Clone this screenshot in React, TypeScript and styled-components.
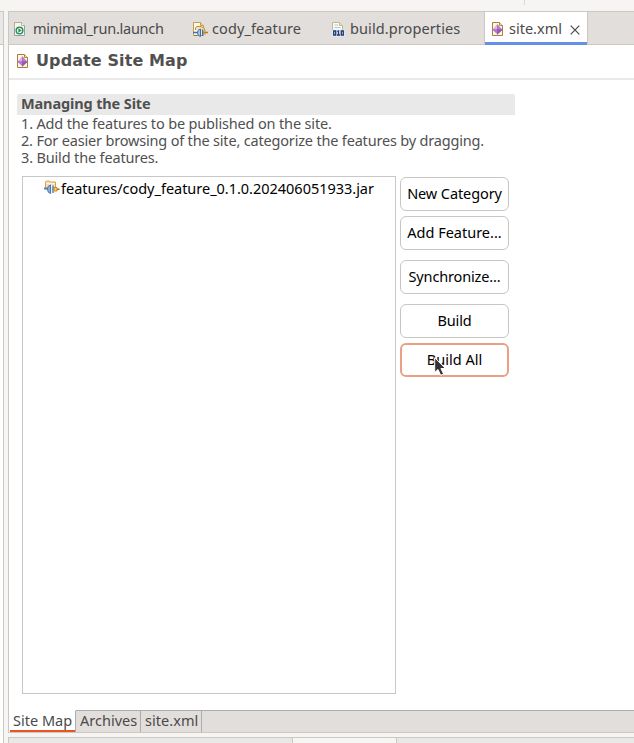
import React from "react";
import styled, { createGlobalStyle } from "styled-components";

const Global = createGlobalStyle`
  *, *::before, *::after { box-sizing: border-box; }
  body { margin: 0; background: #f6f5f4; overflow: hidden; }
`;

const Window = styled.div`
  width: 634px;
  height: 743px;
  display: flex;
  overflow: hidden;
  background: #f6f5f4;
  font: 14.5px/17px "Noto Sans", "Open Sans", sans-serif;
  color: #4a4a4a;
`;

const Text = styled.span<{ $track?: number }>`
  white-space: pre;
  letter-spacing: ${(p) => p.$track ?? 0}px;
`;

const TabText = styled(Text)`
  padding-bottom: 2px;
`;

const NeighbourPane = styled.div`
  width: 4px;
  flex: none;
  margin-top: 11px;
  background: #fff;
  border-top: 1px solid #cdc7c2;
  border-right: 1px solid #cdc7c2;
`;

const NeighbourTabs = styled.div`
  height: 33px;
  background: #e9e8e6;
  border-bottom: 1px solid #cdc7c2;
`;

const Column = styled.div`
  flex: 1;
  min-width: 0;
  margin-left: 4px;
  display: flex;
  flex-direction: column;
`;

const ToolStrip = styled.div`
  height: 11px;
  flex: none;
  display: flex;
  padding-left: 516px;
`;

const Separator = styled.div`
  width: 1px;
  height: 5px;
  background: #dcd8d5;
`;

const Editor = styled.div`
  height: 722px;
  flex: none;
  display: flex;
  flex-direction: column;
  background: #fff;
  border: solid #cdc7c2;
  border-width: 1px 0 1px 1px;
`;

const EditorTabs = styled.div`
  height: 33px;
  flex: none;
  display: flex;
  background: #e1dedb;
  box-shadow: inset 0 -1px #cdc7c2;
`;

const EditorTab = styled.div<{ $width: number; $pad: number; $gap: number; $active?: boolean }>`
  width: ${(p) => p.$width}px;
  height: 33px;
  flex: none;
  display: flex;
  align-items: center;
  gap: ${(p) => p.$gap}px;
  padding-left: ${(p) => p.$pad}px;
  padding-top: 1px;
  ${(p) =>
    p.$active &&
    `background: #fff;
     border: solid #cdc7c2;
     border-width: 0 1px;
     box-shadow: inset 0 -3px #6690e4;`}
`;

const Icon = styled.svg`
  display: block;
  flex: none;
`;

const CloseMark = styled(Icon)`
  margin: 1px 0 0 3px;
`;

const FormHeader = styled.div`
  height: 35px;
  flex: none;
  display: flex;
  gap: 7px;
  padding: 9px 0 0 8px;
  border-bottom: 2px solid #e9e9e9;
`;

const FormTitle = styled.h1`
  margin: -3px 0 0;
  font: bold 16px/19px "DejaVu Sans", sans-serif;
  letter-spacing: 0.1px;
  color: #505050;
  white-space: nowrap;
`;

const Section = styled.section`
  width: 498px;
  margin: 14px 0 0 8px;
  flex: 1;
`;

const SectionTitle = styled.h2`
  height: 21px;
  margin: 0;
  padding: 1px 0 0 4px;
  background: #e9e9e9;
  border-radius: 2px 2px 0 0;
  font-size: 14.5px;
  line-height: 17px;
  font-weight: 700;
  color: #505050;
`;

const Steps = styled.div`
  display: flex;
  flex-direction: column;
  align-items: flex-start;
  padding: 0 0 0 4px;
  color: #505050;
`;

const Body = styled.div`
  display: flex;
  gap: 4px;
  padding: 10px 0 0 5px;
`;

const Tree = styled.div`
  width: 374px;
  height: 518px;
  border: 1px solid #c8c8c8;
  padding: 3px 0 0 21px;
  color: #000;
`;

const TreeRow = styled.div`
  display: flex;
  align-items: flex-start;
  gap: 1px;
`;

const Actions = styled.div`
  display: flex;
  flex-direction: column;
  gap: 5px;
  padding-top: 1px;
`;

const ActionButton = styled.button<{ $spaced?: boolean; $hot?: boolean }>`
  width: 109px;
  height: 34px;
  position: relative;
  margin: ${(p) => (p.$spaced ? 5 : 0)}px 0 0;
  padding: 0 0 1px;
  border: ${(p) => (p.$hot ? "2px solid #eb9f84" : "1px solid #c8c6c5")};
  border-radius: 6px;
  background: #fff;
  color: #000;
  font: inherit;
`;

const Pointer = styled.svg`
  position: absolute;
  left: 32px;
  top: 12px;
`;

const PageTabs = styled.div`
  height: 22px;
  flex: none;
  display: flex;
  padding-left: 1px;
`;

const PageTab = styled.div<{ $width: number; $active?: boolean }>`
  width: ${(p) => p.$width}px;
  padding: 1px 0 0 ${(p) => (p.$active ? 3 : 4)}px;
  border-right: 1px solid #acacac;
  border-top: 1px solid ${(p) => (p.$active ? "#fff" : "#acacac")};
  background: ${(p) => (p.$active ? "#fff" : "#e1dedb")};
  box-shadow: ${(p) => (p.$active ? "inset 0 -2px #e95420" : "none")};
`;

const PageTabsRest = styled.div`
  flex: 1;
  background: #e1dedb;
  border-top: 1px solid #acacac;
`;

const LowerStack = styled.div`
  height: 6px;
  margin-top: 4px;
  border: solid #cdc7c2;
  border-width: 1px 0 0 1px;
  background: #e9e8e6;
  padding-left: 283px;
`;

const LowerTab = styled.div`
  width: 105px;
  height: 5px;
  background: #f6f5f4;
  border: solid #cdc7c2;
  border-width: 0 1px;
`;

const LaunchIcon = () => (
  <Icon width="12" height="14" viewBox="0 0 12 14">
    <path d="M.5.5h7l3 3v10H.5z" fill="#f3f7fb" stroke="#8aa0b5" />
    <path d="M.5 6V.5h7l3 3" fill="none" stroke="#b9ae86" />
    <path d="M7.500.5v3h3" fill="#fff" stroke="#bdb28c" />
    <circle cx="5.500" cy="8.500" r="3.300" fill="#fff" stroke="#2f9150" strokeWidth="1.500" />
    <path d="M4.300 6.300 7.800 8.500l-3.500 2.200z" fill="#2f9150" />
  </Icon>
);

const FeatureIcon = () => (
  <Icon width="15" height="15" viewBox="0 0 15 15">
    <path d="M.5.5h7l3 3v10H.5z" fill="#fdf8e9" stroke="#c69b4f" />
    <path d="M7.500.5v3h3" fill="#f2d695" stroke="#c69b4f" />
    <path d="M2.500 8V5.500l1.500-1h4l3.500 2V9" fill="#f7dfae" stroke="#c98d36" />
    <path d="M0 10.500h5" stroke="#3974bc" strokeWidth="1.500" />
    <path d="M4.500 11q0-3.500 3-4v7.500q-3-.5-3-3.500z" fill="#a9c8ee" stroke="#376eb7" />
    <path d="M9.500 7.500v6.500" stroke="#376eb7" strokeWidth="1.200" />
    <path d="M10.500 9h2.500M10.500 12h2.500" stroke="#d8a22c" strokeWidth="1.200" />
    <path d="M11 10.500h4" stroke="#bd7e10" strokeWidth="1.500" />
    <path d="M1 13.500h3" stroke="#a66f1d" />
  </Icon>
);

const FeatureJarIcon = () => (
  <Icon width="16" height="16" viewBox="0 0 16 16">
    <path d="M1.500 9V2l1-1h2.500l1 1h5.500v7z" fill="#f8dfae" stroke="#d99c55" />
    <path d="M2 3.500h9" stroke="#fdf2d8" />
    <path d="M0 8.500h4" stroke="#4f83c4" strokeWidth="2" />
    <path d="M3.500 9q0-3.500 3-4v8.500q-3-.5-3-4.500z" fill="#8fb0dc" stroke="#4a78b5" />
    <path d="M7.500 4.500v9.500" stroke="#e8f0fa" />
    <path d="M9 5.500v7.500" stroke="#5a86c2" strokeWidth="1.500" />
    <path d="M10 7.500h3v3.500h-3z" fill="#f6d561" stroke="#c58a16" />
    <path d="M13 9.300h2.500" stroke="#a66f10" strokeWidth="1.500" />
  </Icon>
);

const PropertiesIcon = () => (
  <Icon width="13" height="15" viewBox="0 0 13 15">
    <path d="M.5 14V.5h7l3 3V14" fill="#fbfcff" stroke="#c4b777" />
    <path d="M7.500.5v3h3" fill="#efe5b4" stroke="#c4b777" />
    <path d="M2.500 3h3.500M2.500 5.500h6" stroke="#a9c4e8" />
    <path d="M0 7.500h13V15H0z" fill="#dce7f5" />
    <path
      d="M1.700 9h2v4h-2zM5.200 9.500 6.500 9v4M5 13h3M9.300 9h2v4h-2z"
      fill="none"
      stroke="#24386b"
      strokeWidth="1.300"
    />
  </Icon>
);

const SiteIcon = () => (
  <Icon width="12" height="14" viewBox="0 0 12 14">
    <path d="M.5.5h7l3 3v10H.5z" fill="#fdf6e4" stroke="#a98036" />
    <path d="M7.500.5v3h3" fill="#f5dfa8" stroke="#b88934" />
    <path d="M5.500 2.500 10.500 7.700 5.500 12.500.5 7.700z" fill="#b77bd0" />
    <path d="M5.500 2.500v5.200h-5z" fill="#dcb4e8" />
    <path d="M10.500 7.700 5.500 12.500V7.700z" fill="#9659b4" />
    <path d="M.5 7.700h10M5.500 2.500v10" stroke="#9056b0" strokeWidth=".6" />
  </Icon>
);

const CloseIcon = () => (
  <CloseMark width="10" height="10" viewBox="0 0 10 10">
    <path d="m.7.7 8.600 8.600M9.300.7.700 9.300" stroke="#484848" strokeWidth="1.200" />
  </CloseMark>
);

export default function App() {
  return (
    <Window>
      <Global />
      <NeighbourPane>
        <NeighbourTabs />
      </NeighbourPane>
      <Column>
        <ToolStrip>
          <Separator />
        </ToolStrip>
        <Editor>
          <EditorTabs>
            <EditorTab $width={179} $pad={5} $gap={7}>
              <LaunchIcon />
              <TabText $track={-0.26}>minimal_run.launch</TabText>
            </EditorTab>
            <EditorTab $width={138} $pad={5} $gap={4}>
              <FeatureIcon />
              <TabText $track={0.1}>cody_feature</TabText>
            </EditorTab>
            <EditorTab $width={158} $pad={6} $gap={5}>
              <PropertiesIcon />
              <TabText $track={0.1}>build.properties</TabText>
            </EditorTab>
            <EditorTab $width={104} $pad={7} $gap={5} $active>
              <SiteIcon />
              <TabText>site.xml</TabText>
              <CloseIcon />
            </EditorTab>
          </EditorTabs>
          <FormHeader>
            <SiteIcon />
            <FormTitle>Update Site Map</FormTitle>
          </FormHeader>
          <Section>
            <SectionTitle>
              <Text $track={-0.13}>Managing the Site</Text>
            </SectionTitle>
            <Steps>
              <Text $track={-0.16}>1. Add the features to be published on the site.</Text>
              <Text $track={-0.18}>
                2. For easier browsing of the site, categorize the features by dragging.
              </Text>
              <Text $track={-0.16}>3. Build the features.</Text>
            </Steps>
            <Body>
              <Tree>
                <TreeRow>
                  <FeatureJarIcon />
                  <Text $track={-0.02}>features/cody_feature_0.1.0.202406051933.jar</Text>
                </TreeRow>
              </Tree>
              <Actions>
                <ActionButton>
                  <Text $track={-0.1}>New Category</Text>
                </ActionButton>
                <ActionButton>
                  <Text>Add Feature...</Text>
                </ActionButton>
                <ActionButton $spaced>
                  <Text $track={-0.15}>Synchronize...</Text>
                </ActionButton>
                <ActionButton $spaced>
                  <Text $track={-0.15}>Build</Text>
                </ActionButton>
                <ActionButton $hot>
                  <Text>Build All</Text>
                  <Pointer width="13" height="20" viewBox="0 0 13 20">
                    <path
                      d="M.7.8v14.700l3.300-3 2.700 5.800 2.900-1.300-2.700-5.500h4.600z"
                      fill="#333"
                      stroke="#fff"
                    />
                  </Pointer>
                </ActionButton>
              </Actions>
            </Body>
          </Section>
          <PageTabs>
            <PageTab $width={66} $active>
              <Text>Site Map</Text>
            </PageTab>
            <PageTab $width={65}>
              <Text>Archives</Text>
            </PageTab>
            <PageTab $width={61}>
              <Text $track={0.05}>site.xml</Text>
            </PageTab>
            <PageTabsRest />
          </PageTabs>
        </Editor>
        <LowerStack>
          <LowerTab />
        </LowerStack>
      </Column>
    </Window>
  );
}
